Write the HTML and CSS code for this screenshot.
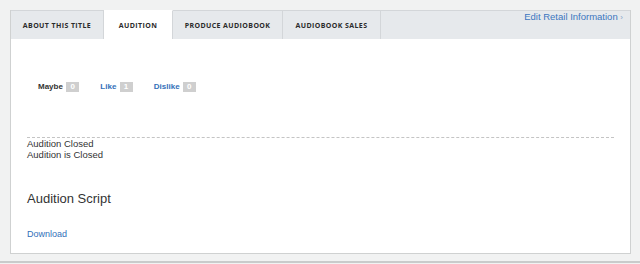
FILE: index.html
```html
<html>
	<head>
		<title>Audition</title>
		<meta name="viewport" content="width=device-width, initial-scale=1.0">
		<link rel="stylesheet" href="styles.css">
	</head>
	<body>
		<div class="panel">
			<div class="tabs">
				<div class="tab tab-about">ABOUT THIS TITLE</div>
				<div class="tab tab-active">AUDITION</div>
				<div class="tab tab-produce">PRODUCE AUDIOBOOK</div>
				<div class="tab tab-sales">AUDIOBOOK SALES</div>
				<div class="tabs-fill">
					<a class="edit-link">Edit Retail Information <span class="chev">›</span></a>
				</div>
			</div>
			<div class="content">
				<div class="votes">
					<span class="vote vote-maybe">Maybe <span class="count">0</span></span>
					<span class="vote vote-like">Like <span class="count">1</span></span>
					<span class="vote vote-dislike">Dislike <span class="count">0</span></span>
				</div>
				<div class="status">
					<div>Audition Closed</div>
					<div>Audition is Closed</div>
				</div>
				<h2 class="script-title">Audition Script</h2>
				<a class="download">Download</a>
			</div>
		</div>
		<div class="footer-line"></div>
	</body>
</html>
```
FILE: styles.css
```css
body {
	margin: 0;
	background-color: #f1f2f2;
	font-family: "Liberation Sans", Arial, sans-serif;
	color: #333;
}
.panel {
	margin: 10px 0 0 10px;
	width: 619px;
	height: 243px;
	background: #fff;
	border: 1px solid #cfd1d1;
	border-top: 0;
	box-sizing: content-box;
}
.tabs {
	display: flex;
	height: 29px;
	background: #e6e9ec;
}
.tab {
	display: flex;
	align-items: center;
	justify-content: center;
	font-family: "Open Sans", sans-serif;
	font-weight: bold;
	font-size: 7px;
	letter-spacing: 0.4px;
	color: #2b2b2b;
	border-right: 1px solid #d3d6d9;
	border-top: 1px solid #d3d6d9;
	box-sizing: border-box;
}
.tab-about {
	width: 93px;
}
.tab-active {
	width: 69px;
	background: #fff;
	border-top-color: #fff;
}
.tab-produce {
	width: 110px;
}
.tab-sales {
	width: 98px;
}
.tabs-fill {
	flex: 1;
	border-top: 1px solid #d3d6d9;
	text-align: right;
	padding: 0 7px 0 0;
}
.edit-link {
	font-size: 9.5px;
	color: #3b76c0;
}
.chev {
	font-size: 8px;
	color: #8aa6c9;
}
.content {
	padding: 0 16px;
}
.votes {
	padding: 43px 0 0 11px;
	height: 58px;
	font-size: 8px;
	font-weight: bold;
	box-sizing: border-box;
}
.vote {
	margin-right: 19px;
}
.vote-like, .vote-dislike {
	color: #3370b9;
}
.count {
	display: inline-block;
	background: #cfcfcf;
	color: #fff;
	width: 13px;
	text-align: center;
	line-height: 10px;
	margin-left: 1px;
}
.status {
	margin-top: 40px;
	border-top: 1px dashed #c4c4c4;
	width: 587px;
	font-size: 9.5px;
	line-height: 11px;
}
.script-title {
	margin: 31px 0 0 0;
	font-size: 13px;
	font-weight: normal;
}
.download {
	display: block;
	margin-top: 23px;
	font-size: 9px;
	color: #3370b9;
}
.footer-line {
	margin-top: 7px;
	height: 2px;
	background: #c9cbcb;
}
```
